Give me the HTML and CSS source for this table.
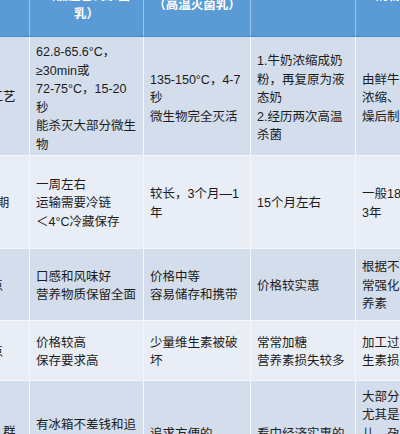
FILE: index.html
```html
<!DOCTYPE html>
<html lang="zh-CN">
<head>
<meta charset="utf-8">
<title>牛奶种类对比</title>
<link rel="stylesheet" href="styles.css">
</head>
<body>
<div class="viewport">
<table class="milk-table">
  <colgroup>
    <col class="c-label">
    <col class="c-past">
    <col class="c-uht">
    <col class="c-recon">
    <col class="c-powder">
  </colgroup>
  <thead>
    <tr class="r-head">
      <th></th>
      <th>巴氏杀菌乳<br>（低温巴氏杀菌<br>乳）</th>
      <th>超高温灭菌乳<br>（高温灭菌乳）</th>
      <th class="th-high">复原乳</th>
      <th>奶粉（乳粉）</th>
    </tr>
  </thead>
  <tbody>
    <tr class="r-1 dark">
      <td class="label">生产工艺</td>
      <td>62.8-65.6°C，<br>≥30min或<br>72-75°C，15-20<br>秒<br>能杀灭大部分微生<br>物</td>
      <td>135-150°C，4-7<br>秒<br>微生物完全灭活</td>
      <td>1.牛奶浓缩成奶<br>粉，再复原为液<br>态奶<br>2.经历两次高温<br>杀菌</td>
      <td>由鲜牛奶经过<br>浓缩、喷雾干<br>燥后制成</td>
    </tr>
    <tr class="r-2 light">
      <td class="label">保质期</td>
      <td>一周左右<br>运输需要冷链<br>＜4°C冷藏保存</td>
      <td>较长，3个月—1<br>年</td>
      <td>15个月左右</td>
      <td>一般18个月—<br>3年</td>
    </tr>
    <tr class="r-3 dark">
      <td class="label">优点</td>
      <td>口感和风味好<br>营养物质保留全面</td>
      <td>价格中等<br>容易储存和携带</td>
      <td>价格较实惠</td>
      <td>根据不同需要，经<br>常强化某些营<br>养素</td>
    </tr>
    <tr class="r-4 light">
      <td class="label">缺点</td>
      <td>价格较高<br>保存要求高</td>
      <td>少量维生素被破<br>坏</td>
      <td>常常加糖<br>营养素损失较多</td>
      <td>加工过程中维<br>生素损失较多</td>
    </tr>
    <tr class="r-5 dark">
      <td class="label label-low">适合人群</td>
      <td>有冰箱不差钱和追<br>求新鲜营养的<br>人群</td>
      <td>追求方便的<br>上班族</td>
      <td>看中经济实惠的<br>人群</td>
      <td>大部分人都适合，<br>尤其是老人、婴<br>儿、孕妇、青少<br>年等需要补充营<br>养的人群<br>&nbsp;</td>
    </tr>
  </tbody>
</table>
</div>
</body>
</html>
```
FILE: styles.css
```css
html, body {
  margin: 0;
  padding: 0;
  background: #e8edf5;
}
body {
  width: 400px;
  height: 434px;
  overflow: hidden;
  font-family: "Liberation Sans", "Noto Sans CJK SC", sans-serif;
  color: #1c1c1c;
}
.viewport {
  margin-left: -49px;
  margin-top: -44px;
}
.milk-table {
  table-layout: fixed;
  border-collapse: collapse;
  width: 519px;
  font-size: 12.5px;
  line-height: 18.5px;
}
.c-label { width: 78px; }
.c-past { width: 114px; }
.c-uht { width: 107px; }
.c-recon { width: 105px; }
.c-powder { width: 115px; }

.milk-table th {
  background: #5b9bd5;
  color: #ffffff;
  font-weight: bold;
  text-align: center;
  vertical-align: middle;
  padding: 0 4px;
  border-left: 1px solid #9dc3ea;
  border-bottom: 1px solid #4d8ccb;
}
.milk-table th.th-high {
  padding-bottom: 20px;
}
.r-head { height: 80px; }
.r-1 { height: 119px; }
.r-2 { height: 93px; }
.r-3 { height: 72px; }
.r-4 { height: 60px; }
.r-5 { height: 122px; }

.milk-table td {
  text-align: left;
  vertical-align: middle;
  padding: 4px 4px 0 6px;
  border-left: 1px solid #f4f7fb;
  border-top: 1px solid #f4f7fb;
}
.r-1 td { padding-top: 6px; }
.dark td { background: #d3ddeb; }
.light td { background: #e9eef6; }
.milk-table td.label {
  text-align: center;
  padding: 4px 0 0 0;
}
.milk-table td.label-low {
  padding: 0 0 18px 0;
}
```
